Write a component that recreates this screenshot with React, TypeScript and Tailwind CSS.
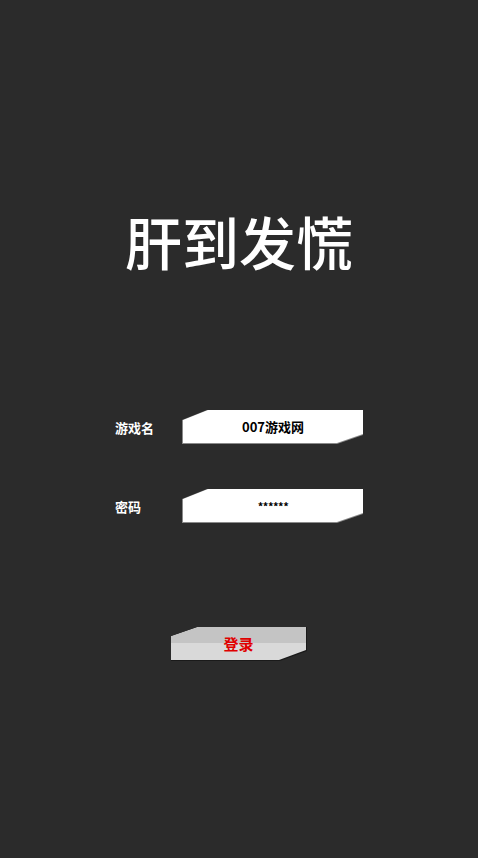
import React from 'react';

const inputClip = {
  clipPath:
    'polygon(25px 0, 100% 0, 100% calc(100% - 9px), calc(100% - 26px) 100%, 0 100%, 0 10px)',
};

const buttonClip = {
  clipPath:
    'polygon(26px 0, 100% 0, 100% calc(100% - 10px), calc(100% - 27px) 100%, 0 100%, 0 9px)',
};

const Field = ({
  label,
  value,
  className,
  valueClass,
}: {
  label: string;
  value: string;
  className?: string;
  valueClass?: string;
}) => (
  <div className={`flex items-center w-[248px] ${className ?? ''}`}>
    <span className="w-[67px] text-[13px] font-bold text-white leading-none">{label}</span>
    <div className="w-[181px] h-[34px] bg-[#8a8a8a] pl-px pb-px" style={inputClip}>
      <div
        className="w-full h-full bg-white flex items-center justify-center font-bold text-black leading-none"
        style={inputClip}
      >
        <span className={valueClass ?? 'text-[13px]'}>{value}</span>
      </div>
    </div>
  </div>
);

const App = () => {
  return (
    <div
      className="w-full min-h-[858px] bg-[#2b2b2b] flex flex-col items-center"
      style={{ fontFamily: '"Noto Sans CJK SC", "Noto Sans", sans-serif' }}
    >
      <h1 className="mt-[212px] text-[57px] leading-none font-medium text-white">肝到发慌</h1>

      <Field label="游戏名" value="007游戏网" className="mt-[141px]" />
      <Field
        label="密码"
        value="******"
        className="mt-[45px]"
        valueClass="text-[11px] tracking-[-0.5px] pt-[2px]"
      />

      <button
        className="mt-[104px] w-[136px] h-[34px] bg-[#1a1a1a] pb-px pr-px cursor-pointer"
        style={buttonClip}
      >
        <div
          className="w-full h-full flex items-center justify-center bg-[linear-gradient(to_bottom,#c4c4c4_16px,#d9d9d9_16px)] text-[15px] font-bold text-[#e00000] leading-none"
          style={buttonClip}
        >
          登录
        </div>
      </button>
    </div>
  );
};

export default App;
